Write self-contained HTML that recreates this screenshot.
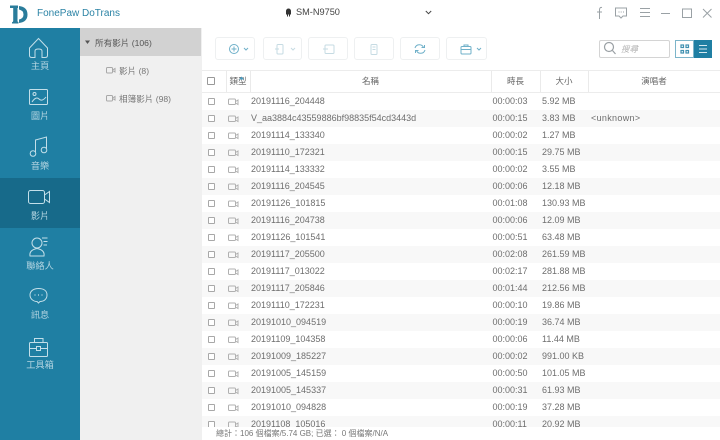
<!DOCTYPE html>
<html><head><meta charset="utf-8">
<style>
*{box-sizing:border-box}
html,body{margin:0;padding:0}
body{width:720px;height:440px;overflow:hidden;background:#fff;position:relative;font-family:"Liberation Sans","Noto Sans CJK TC",sans-serif;color:#666}
.a{position:absolute}
.side{left:0;top:28px;width:80px;height:412px;background:#1f7fa3}
.sel{left:0;top:178px;width:80px;height:50px;background:#176a8a}
.lbl{left:0;width:80px;text-align:center;font-size:9.2px;color:#b5d6e2;line-height:12px}
.tree{left:80px;top:28px;width:122px;height:412px;background:#f0f0f0}
.treeh{left:80px;top:28px;width:121px;height:28px;background:#d2d2d2}
.t{font-size:8.6px;white-space:nowrap;line-height:12px}
.btn{top:37px;height:23px;border:1px solid #eef0f1;border-radius:3px;background:#fff}
.row{position:absolute;left:0;width:518px;height:17px}
.row span{position:absolute;top:2px;font-size:9px;line-height:13px;white-space:nowrap;color:#6e6e6e}
.cb{position:absolute;left:6px;top:4.5px;width:7px;height:7px;border:1px solid #a8a8a8;border-radius:1px;background:#fff}
.row svg{position:absolute;left:25.500px;top:4.500px}
.n{left:49px}.d{left:290.500px}.s{left:340px}
.row .u{left:389px;letter-spacing:.32px}
.g{background:#f8f8f8}
.hd{top:70px;height:23px;font-size:8.500px;line-height:23px;text-align:center;color:#666;white-space:nowrap}
.vl{top:71px;width:1px;height:21px;background:#eaeaea}
</style></head><body>
<svg width="0" height="0" style="position:absolute"><symbol id="v" viewBox="0 0 11 8"><g fill="none" stroke="#b0b0b0"><rect x=".5" y="1" width="7" height="5.500" rx="1"/><path d="M7.500 3.500L10 2v4.500L7.500 5"/></g></symbol></svg>
<svg class="a" style="left:9px;top:4px" width="20" height="20" viewBox="0 0 20 20"><path d="M1 1.500h8v2.500H8.500V17Q8.500 18 9.500 18.200V19.500H3V18.200Q4.200 18 4.200 17V4H1z" fill="#2a7c9b"/><path d="M10 2Q18.500 3 18.500 10.500Q18.500 18 10 19V15.500Q14.500 14.500 14.500 10.500Q14.500 6.500 10 5.500z" fill="#2a7c9b"/></svg>
<div class="a" style="left:37px;top:6px;font-size:10px;line-height:16px;color:#2b83a5;white-space:nowrap">FonePaw DoTrans</div>

<svg class="a" style="left:285px;top:8px" width="7" height="9" viewBox="0 0 7 9"><path d="M1 3a2.500 2.500 0 0 1 5 0v3.500H5V8.500H4V6.500H3V8.500H2V6.500H1z" fill="#333"/></svg>
<div class="a" style="left:296px;top:6px;font-size:9.200px;line-height:13px;color:#444;white-space:nowrap">SM-N9750</div>
<svg class="a" style="left:425px;top:10px" width="7" height="5" viewBox="0 0 7 5"><path d="M.8 1l2.700 2.700L6.200 1" fill="none" stroke="#444" stroke-width="1"/></svg>

<svg class="a" style="left:594px;top:6px" width="126" height="15" viewBox="0 0 126 15" fill="none" stroke="#9aa1a5" stroke-width="1">
<path d="M8 1.500Q5.500 1 5.500 4V13M3 6h5"/>
<path d="M21.500 2h11v8H29l-2 2-2-2h-3.500z"/><path d="M24.500 6h1M26.700 6h1M29 6h1"/>
<path d="M46 2.500h10M46 6.500h10M46 10.500h10"/>
<path d="M67 7.500h9"/>
<path d="M88.500 3h9v8.500h-9z"/>
<path d="M109 3l8.500 8.500M117.500 3L109 11.500"/>
</svg>

<div class="a side"></div><div class="a sel"></div>
<svg class="a" style="left:0;top:28px" width="80" height="350" viewBox="0 0 80 350" fill="none" stroke="#c3dfe9" stroke-width="1">
<path d="M38.500 10.500L29.500 20V27.500Q29.500 29.500 32 29.500H35V23Q35 21 38.500 21T42 23V29.500H45Q47.500 29.500 47.500 27.500V20z"/>
<rect x="29.500" y="61.500" width="18" height="15" rx="1"/><circle cx="34.500" cy="66" r="1.500"/><path d="M32 74Q36 68 39 71T46 69"/>
<path d="M35.500 124V112L46.500 109V121"/><circle cx="33" cy="125.500" r="2.800"/><circle cx="44" cy="122" r="2.800"/>
<rect x="28.500" y="162.500" width="16" height="13" rx="2"/><path d="M44.500 167L49.500 163.500V174.500L44.500 171"/>
<circle cx="37" cy="215" r="5"/><path d="M30 228Q29 222 37 220.500Q45 222 44 228z"/><path d="M42 210h5.500M43.500 213.500h4M43.500 217h3.500"/>
<path d="M38.500 260.500C33 260.500 30 263.500 30 267S33 273.500 37 273.500L38.500 275 40 273.500C44 273.500 47 271 47 267S44 260.500 38.500 260.500z"/><path d="M34.500 267h1M38 267h1M41.500 267h1" stroke-width="1.200"/>
<rect x="29.500" y="314.500" width="18" height="14" rx="1"/><path d="M34.500 314.500V310.500H43V314.500M29.500 320.500H36.500M41 320.500H47.500"/><rect x="36.500" y="318.500" width="4" height="4"/>
</svg>
<div class="a lbl" style="top:60px">主頁</div>
<div class="a lbl" style="top:110px">圖片</div>
<div class="a lbl" style="top:160px">音樂</div>
<div class="a lbl" style="top:210px">影片</div>
<div class="a lbl" style="top:260px">聯絡人</div>
<div class="a lbl" style="top:309px">訊息</div>
<div class="a lbl" style="top:359px">工具箱</div>

<div class="a tree"></div><div class="a treeh"></div>
<svg class="a" style="left:85px;top:40px" width="6" height="5"><path d="M0 .5h5L2.500 4z" fill="#555"/></svg>
<div class="a t" style="left:95px;top:37px;color:#555">所有影片 (106)</div>
<svg class="a" style="left:106px;top:67px" width="10" height="7" fill="none" stroke="#a8a8a8"><rect x=".5" y=".5" width="6" height="5.500" rx="1"/><path d="M6.500 3L9 1.500V5L6.500 3.500"/></svg>
<div class="a t" style="left:119px;top:65px;color:#777">影片 (8)</div>
<svg class="a" style="left:106px;top:95px" width="10" height="7" fill="none" stroke="#a8a8a8"><rect x=".5" y=".5" width="6" height="5.500" rx="1"/><path d="M6.500 3L9 1.500V5L6.500 3.500"/></svg>
<div class="a t" style="left:119px;top:93px;color:#777">相簿影片 (98)</div>

<div class="a btn" style="left:215px;width:40px"></div>
<div class="a btn" style="left:263px;width:39px"></div>
<div class="a btn" style="left:308px;width:40px"></div>
<div class="a btn" style="left:354px;width:40px"></div>
<div class="a btn" style="left:400px;width:40px"></div>
<div class="a btn" style="left:446px;width:41px"></div>
<svg class="a" style="left:215px;top:37px" width="275" height="23" viewBox="0 0 275 23" fill="none" stroke-width="1">
<g stroke="#6fb0c9"><circle cx="19" cy="12" r="4.500"/><path d="M19 9.500v5M16.500 12h5"/><path d="M29 11l2 2 2-2"/></g>
<g stroke="#c6dbe3"><rect x="62" y="7.500" width="6" height="9.500" rx="1"/><path d="M60 12h4M76 11l2 2 2-2"/>
<rect x="110" y="8" width="9" height="8.500" rx="1"/><path d="M108 12h5"/>
<rect x="156" y="7.500" width="6" height="10" rx="1"/><path d="M157.500 10h3M157.500 12.500h3"/></g>
<g stroke="#6fb0c9"><path d="M200 11A4.500 4.500 0 0 1 208.500 10.500M210 13A4.500 4.500 0 0 1 201.500 13.500"/><path d="M206.500 10.500h3V8M203.500 13.500h-3V16"/>
<rect x="246" y="9.500" width="10" height="7.500" rx="1"/><path d="M249 9.500V8h4v1.500M246 12.500h10M262 11l2 2 2-2"/></g>
</svg>
<div class="a" style="left:599px;top:40px;width:71px;height:18px;border:1px solid #d4d4d4;border-radius:2px;background:#fff"></div>
<svg class="a" style="left:603px;top:41px" width="14" height="15" fill="none" stroke="#9aa0a4" stroke-width="1.200"><circle cx="6" cy="6" r="4.500"/><path d="M9.500 9.500l3 3.500"/></svg>
<div class="a" style="left:621px;top:43px;font-size:8.500px;line-height:12px;color:#b5b5b5;font-style:italic">搜尋</div>
<div class="a" style="left:675px;top:40px;width:19px;height:18px;border:1px solid #7db5ca;background:#fff"></div>
<div class="a" style="left:694px;top:40px;width:18px;height:18px;background:#1f7fa3"></div>
<svg class="a" style="left:676px;top:40px" width="36" height="18" fill="none"><g stroke="#3f90b0" stroke-width="1.200"><rect x="5" y="5" width="2.500" height="2.500"/><rect x="10" y="5" width="2.500" height="2.500"/><rect x="5" y="10.500" width="2.500" height="2.500"/><rect x="10" y="10.500" width="2.500" height="2.500"/></g><path d="M23 5.500h8M23 9h8M23 12.500h8" stroke="#d5e9f0"/></svg>

<div class="a" style="left:202px;top:70px;width:518px;height:1px;background:#ececec"></div>
<div class="a" style="left:202px;top:92px;width:518px;height:1px;background:#ececec"></div>
<div class="a" style="left:207px;top:77px;width:8px;height:8px;border:1px solid #999;border-radius:1px"></div>
<div class="a vl" style="left:226px"></div><div class="a vl" style="left:250px"></div><div class="a vl" style="left:491px"></div><div class="a vl" style="left:540px"></div><div class="a vl" style="left:588px"></div>
<div class="a hd" style="left:226px;width:24px">類型</div>
<svg class="a" style="left:239px;top:76px" width="5" height="4"><path d="M0 3.500L2.500 .5 5 3.500z" fill="#4a9cc0"/></svg>
<div class="a hd" style="left:250px;width:241px">名稱</div>
<div class="a hd" style="left:491px;width:49px">時長</div>
<div class="a hd" style="left:540px;width:48px">大小</div>
<div class="a hd" style="left:588px;width:132px">演唱者</div>

<div class="a" style="left:202px;top:93px;width:518px;height:335px;overflow:hidden">
<div class="row" style="top:0"><i class="cb"></i><svg width="11" height="8"><use href="#v"/></svg><span class="n">20191116_204448</span><span class="d">00:00:03</span><span class="s">5.92 MB</span></div>
<div class="row g" style="top:17px"><i class="cb"></i><svg width="11" height="8"><use href="#v"/></svg><span class="n">V_aa3884c43559886bf98835f54cd3443d</span><span class="d">00:00:15</span><span class="s">3.83 MB</span><span class="u">&lt;unknown&gt;</span></div>
<div class="row" style="top:34px"><i class="cb"></i><svg width="11" height="8"><use href="#v"/></svg><span class="n">20191114_133340</span><span class="d">00:00:02</span><span class="s">1.27 MB</span></div>
<div class="row g" style="top:51px"><i class="cb"></i><svg width="11" height="8"><use href="#v"/></svg><span class="n">20191110_172321</span><span class="d">00:00:15</span><span class="s">29.75 MB</span></div>
<div class="row" style="top:68px"><i class="cb"></i><svg width="11" height="8"><use href="#v"/></svg><span class="n">20191114_133332</span><span class="d">00:00:02</span><span class="s">3.55 MB</span></div>
<div class="row g" style="top:85px"><i class="cb"></i><svg width="11" height="8"><use href="#v"/></svg><span class="n">20191116_204545</span><span class="d">00:00:06</span><span class="s">12.18 MB</span></div>
<div class="row" style="top:102px"><i class="cb"></i><svg width="11" height="8"><use href="#v"/></svg><span class="n">20191126_101815</span><span class="d">00:01:08</span><span class="s">130.93 MB</span></div>
<div class="row g" style="top:119px"><i class="cb"></i><svg width="11" height="8"><use href="#v"/></svg><span class="n">20191116_204738</span><span class="d">00:00:06</span><span class="s">12.09 MB</span></div>
<div class="row" style="top:136px"><i class="cb"></i><svg width="11" height="8"><use href="#v"/></svg><span class="n">20191126_101541</span><span class="d">00:00:51</span><span class="s">63.48 MB</span></div>
<div class="row g" style="top:153px"><i class="cb"></i><svg width="11" height="8"><use href="#v"/></svg><span class="n">20191117_205500</span><span class="d">00:02:08</span><span class="s">261.59 MB</span></div>
<div class="row" style="top:170px"><i class="cb"></i><svg width="11" height="8"><use href="#v"/></svg><span class="n">20191117_013022</span><span class="d">00:02:17</span><span class="s">281.88 MB</span></div>
<div class="row g" style="top:187px"><i class="cb"></i><svg width="11" height="8"><use href="#v"/></svg><span class="n">20191117_205846</span><span class="d">00:01:44</span><span class="s">212.56 MB</span></div>
<div class="row" style="top:204px"><i class="cb"></i><svg width="11" height="8"><use href="#v"/></svg><span class="n">20191110_172231</span><span class="d">00:00:10</span><span class="s">19.86 MB</span></div>
<div class="row g" style="top:221px"><i class="cb"></i><svg width="11" height="8"><use href="#v"/></svg><span class="n">20191010_094519</span><span class="d">00:00:19</span><span class="s">36.74 MB</span></div>
<div class="row" style="top:238px"><i class="cb"></i><svg width="11" height="8"><use href="#v"/></svg><span class="n">20191109_104358</span><span class="d">00:00:06</span><span class="s">11.44 MB</span></div>
<div class="row g" style="top:255px"><i class="cb"></i><svg width="11" height="8"><use href="#v"/></svg><span class="n">20191009_185227</span><span class="d">00:00:02</span><span class="s">991.00 KB</span></div>
<div class="row" style="top:272px"><i class="cb"></i><svg width="11" height="8"><use href="#v"/></svg><span class="n">20191005_145159</span><span class="d">00:00:50</span><span class="s">101.05 MB</span></div>
<div class="row g" style="top:289px"><i class="cb"></i><svg width="11" height="8"><use href="#v"/></svg><span class="n">20191005_145337</span><span class="d">00:00:31</span><span class="s">61.93 MB</span></div>
<div class="row" style="top:306px"><i class="cb"></i><svg width="11" height="8"><use href="#v"/></svg><span class="n">20191010_094828</span><span class="d">00:00:19</span><span class="s">37.28 MB</span></div>
<div class="row g" style="top:323px"><i class="cb"></i><svg width="11" height="8"><use href="#v"/></svg><span class="n">20191108_105016</span><span class="d">00:00:11</span><span class="s">20.92 MB</span></div>
</div>
<div class="a" style="left:202px;top:427px;width:518px;height:13px;background:#fff"></div>
<div class="a" style="left:216px;top:428px;font-size:8px;line-height:12px;color:#777;white-space:nowrap">總計：106 個檔案/5.74 GB; 已選： 0 個檔案/N/A</div>
</body></html>
